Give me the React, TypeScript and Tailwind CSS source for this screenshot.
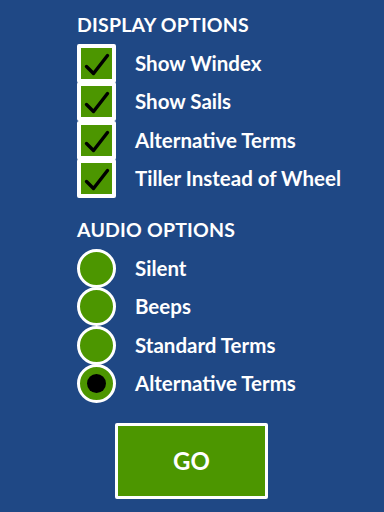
import React from "react";

const displayOptions = [
  "Show Windex",
  "Show Sails",
  "Alternative Terms",
  "Tiller Instead of Wheel",
];

const audioOptions = ["Silent", "Beeps", "Standard Terms", "Alternative Terms"];

const CheckBox = () => (
  <div className="flex h-[39px] w-[39px] shrink-0 items-center justify-center rounded-[2px] border-[4px] border-white bg-[#4c9600]">
    <svg width="31" height="31" viewBox="0 0 31 31" fill="none">
      <path
        d="M5.5 18.5 L12.5 25.5 L26.5 7.5"
        stroke="#000"
        strokeWidth="3.4"
        strokeLinecap="round"
        strokeLinejoin="round"
      />
    </svg>
  </div>
);

const Radio = ({ selected }: { selected: boolean }) => (
  <div className="flex h-[39px] w-[39px] shrink-0 items-center justify-center rounded-full border-[3px] border-white bg-[#4c9600]">
    {selected && <div className="h-[19px] w-[19px] rounded-full bg-black" />}
  </div>
);

export default function App() {
  return (
    <div
      className="flex h-[512px] w-[384px] flex-col bg-[#1f4885] pl-[77px] pt-[13px] text-white"
      style={{ fontFamily: "Lato, 'Noto Sans', sans-serif" }}
    >
      <h2 className="text-[19.5px] font-bold leading-[24px] tracking-[0.2px]">DISPLAY OPTIONS</h2>
      <div className="mt-[7px] flex flex-col">
        {displayOptions.map((label) => (
          <div key={label} className="flex h-[38.5px] items-center gap-[19px]">
            <CheckBox />
            <span className="text-[20.5px] font-bold">{label}</span>
          </div>
        ))}
      </div>

      <h2 className="mt-[20px] text-[19.5px] font-bold leading-[24px] tracking-[0.2px]">AUDIO OPTIONS</h2>
      <div className="mt-[7px] flex flex-col">
        {audioOptions.map((label, i) => (
          <div key={label} className="flex h-[38.5px] items-center gap-[19px]">
            <Radio selected={i === 3} />
            <span className="text-[20.5px] font-bold">{label}</span>
          </div>
        ))}
      </div>

      <div className="mt-[20px] ml-[38px] flex h-[76px] w-[153px] items-center justify-center self-start rounded-[2px] border-[3px] border-white bg-[#4c9600]">
        <span className="text-[24px] font-bold">GO</span>
      </div>
    </div>
  );
}
